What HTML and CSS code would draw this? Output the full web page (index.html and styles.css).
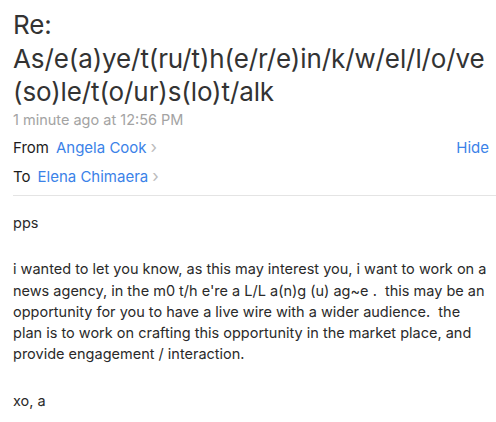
FILE: index.html
```html
<!DOCTYPE html>
<html>
<head>
<meta charset="utf-8">
<link rel="stylesheet" href="styles.css">
</head>
<body>
<div class="mail">
  <h1 class="subject">Re: As/e(a)ye/t(ru/t)h(e/r/e)in/k/w/el/l/o/ve(so)le/t(o/ur)s(lo)t/alk</h1>
  <div class="meta">1 minute ago at 12:56 PM</div>
  <div class="row row-from">
    <span class="label">From</span>
    <span class="name">Angela Cook</span><span class="chev">›</span>
    <span class="hide">Hide</span>
  </div>
  <div class="row row-to">
    <span class="label">To</span>
    <span class="name">Elena Chimaera</span><span class="chev">›</span>
  </div>
  <div class="sep"></div>
  <div class="body">
    <p>pps</p>
    <p>i wanted to let you know, as this may interest you, i want to work on a news agency, in the m0 t/h e're a L/L a(n)g (u) ag~e .&nbsp; this may be an opportunity for you to have a live wire with a wider audience.&nbsp; the plan is to work on crafting this opportunity in the market place, and provide engagement / interaction.</p>
    <p>xo, a</p>
  </div>
</div>
</body>
</html>
```

FILE: styles.css
```css
html, body {
  margin: 0;
  padding: 0;
  background: #fff;
}
body {
  font-family: Inter, "Open Sans", sans-serif;
  width: 496px;
  height: 422px;
  overflow: hidden;
}
.mail {
  padding: 0 0 0 13px;
}
.subject {
  margin: 0;
  padding: 8px 10px 0 0;
  font-size: 26px;
  font-weight: 400;
  line-height: 33.5px;
  color: #333;
  overflow-wrap: anywhere;
  letter-spacing: -0.1px;
}
.meta {
  font-size: 14.5px;
  color: #a3a3a3;
  line-height: 20px;
  margin-top: 1px;
}
.row {
  display: flex;
  align-items: baseline;
  font-size: 15px;
  line-height: 20px;
  padding-right: 7px;
}
.row-from {
  margin-top: 7px;
}
.row-to {
  margin-top: 8px;
}
.label {
  color: #1c1c1c;
  margin-right: 7px;
}
.name {
  color: #3b82e8;
}
.chev {
  color: #bcbcbc;
  margin-left: 4px;
  font-size: 17px;
}
.hide {
  margin-left: auto;
  color: #3b82e8;
}
.sep {
  height: 1px;
  background: #e4e4e4;
  margin-top: 8px;
}
.body {
  font-size: 14.5px;
  line-height: 21.25px;
  color: #2a2a2a;
  padding: 16px 4px 0 0;
}
.body p {
  margin: 0 0 25.5px 0;
}
```
